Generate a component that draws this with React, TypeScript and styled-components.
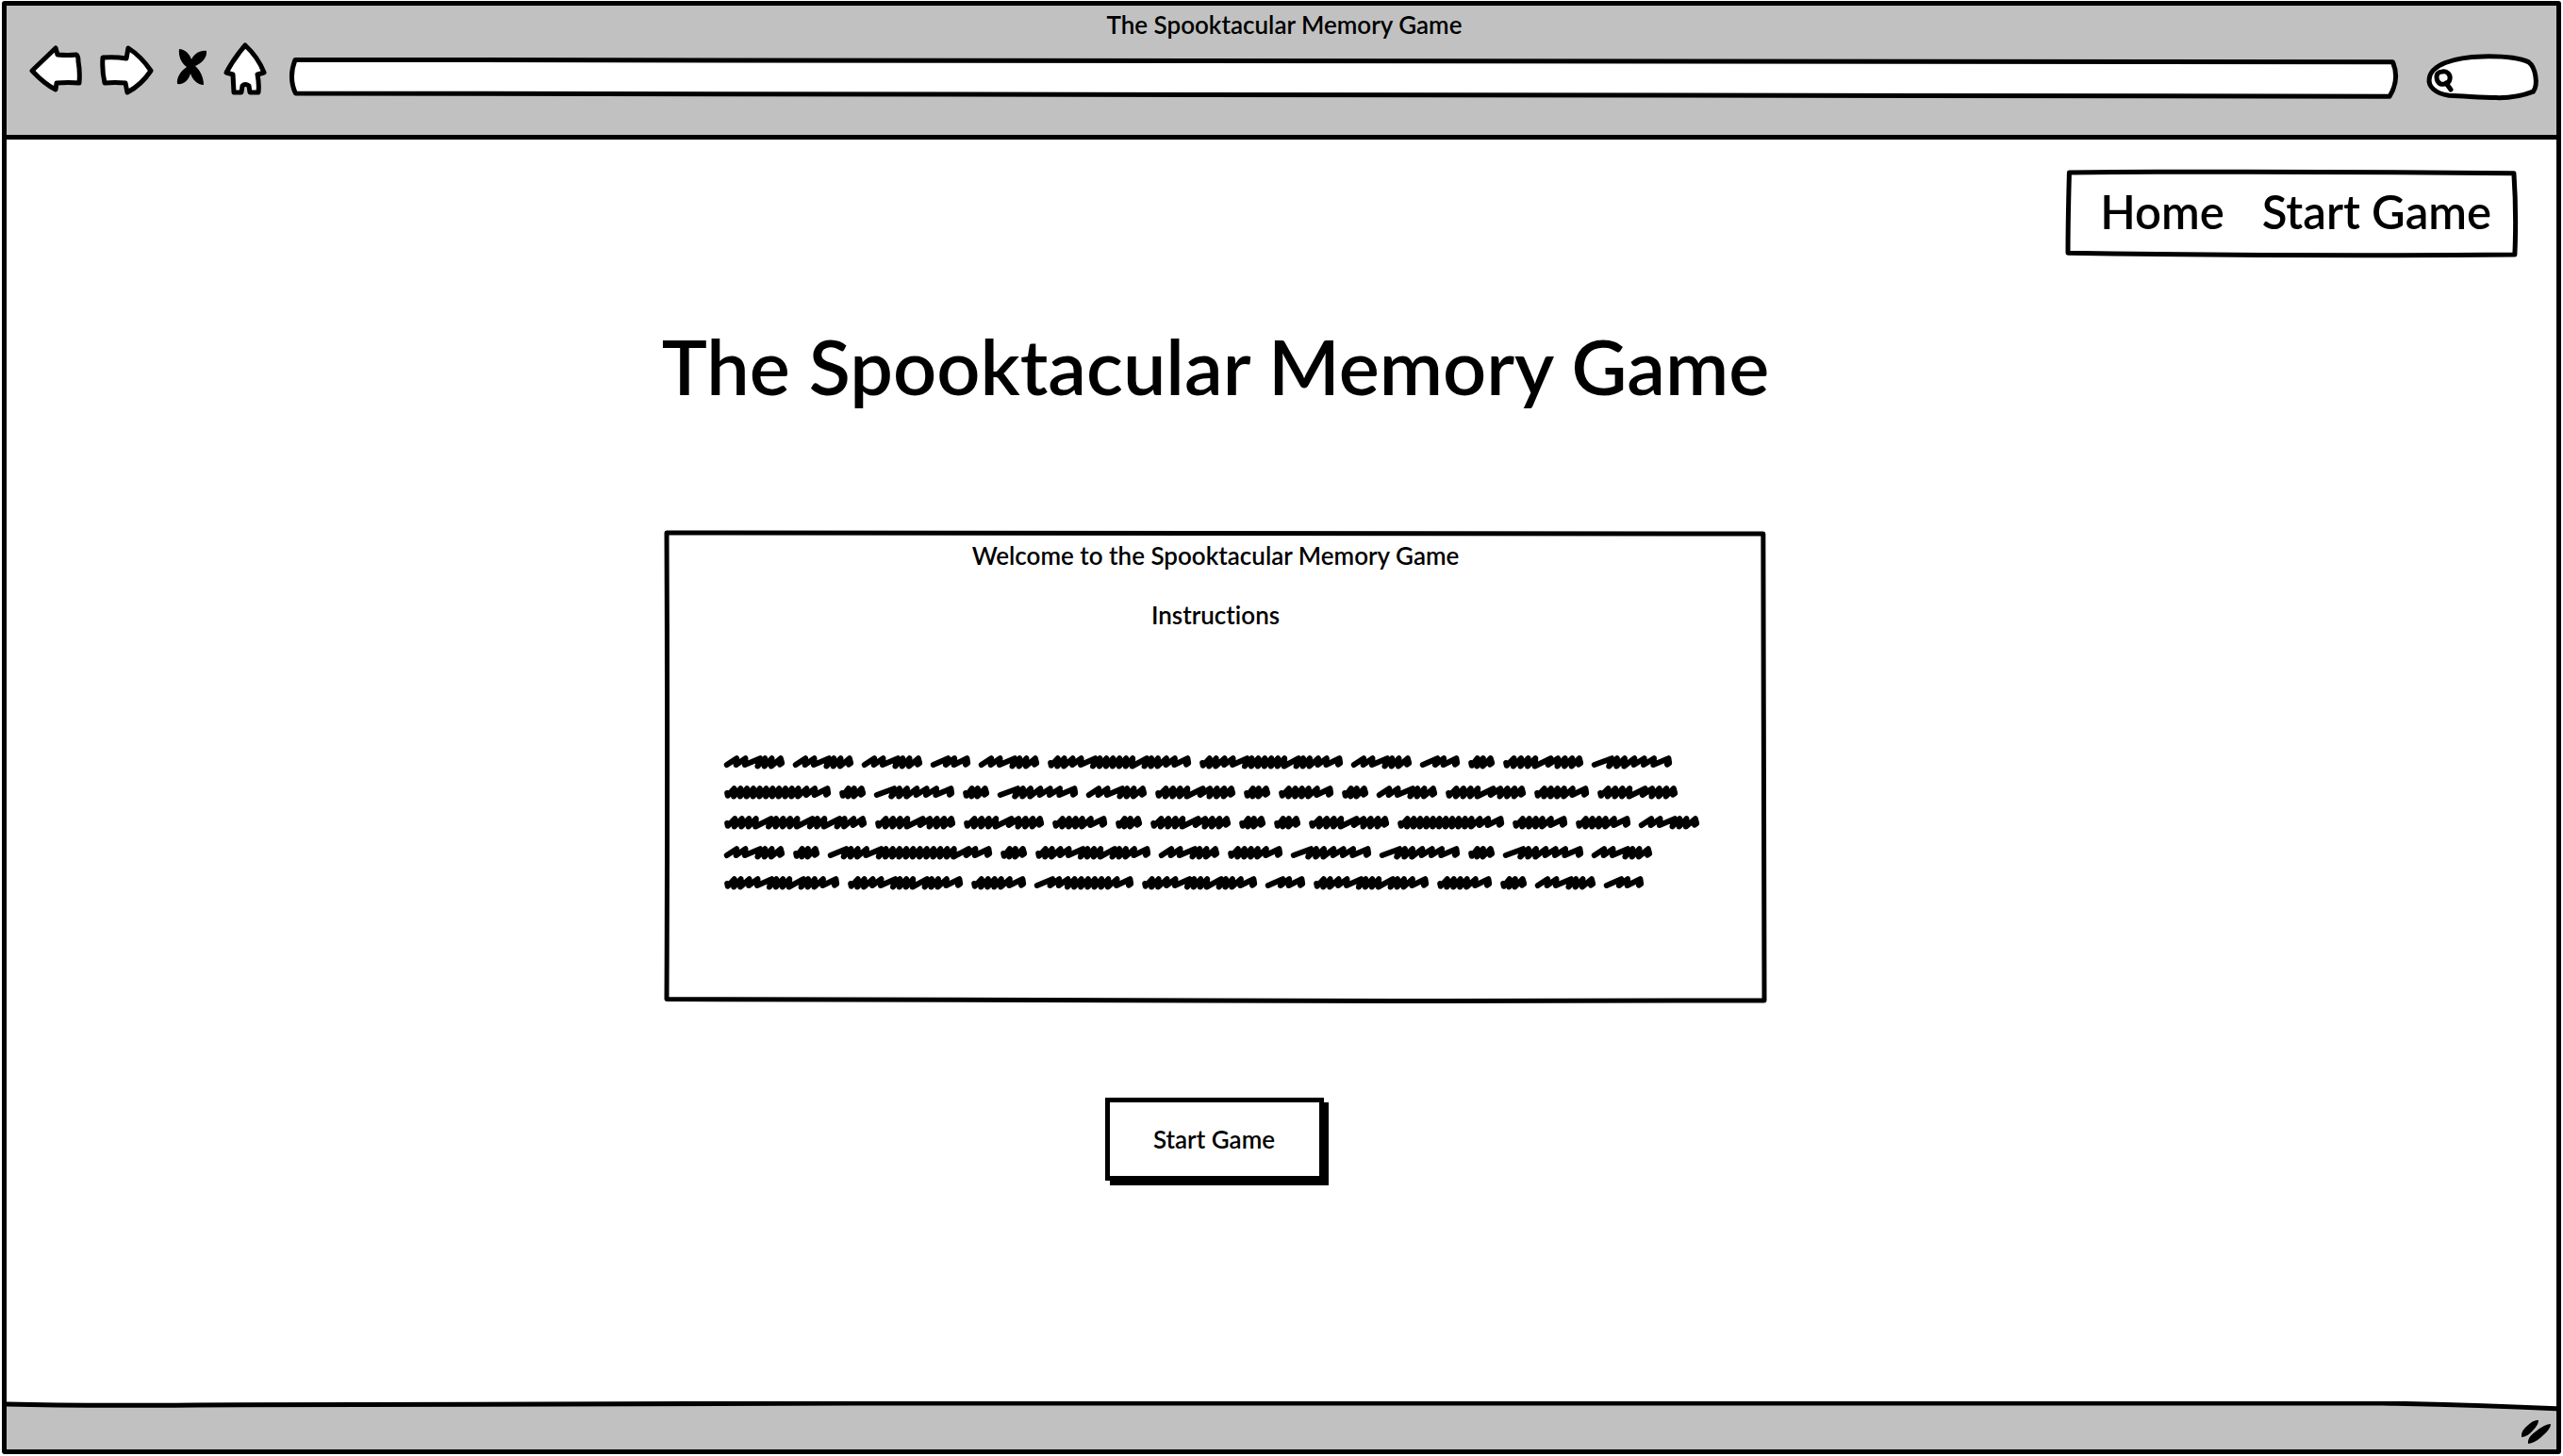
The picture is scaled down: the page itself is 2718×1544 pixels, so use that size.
import React from 'react';
import styled, { createGlobalStyle } from 'styled-components';

const ink = '#000';
const chrome = '#c1c1c1';

const GlobalStyle = createGlobalStyle`
  *, *::before, *::after { box-sizing: border-box; }
  body {
    margin: 0;
    background: #fff;
    color: ${ink};
    font-family: Lato, "Noto Sans", sans-serif;
    font-weight: 600;
    font-variant-ligatures: none;
  }
  h1, p { margin: 0; }
`;

const Page = styled.div`
  min-height: 100vh;
  padding: 1px 2px 2px;
  display: flex;
`;

const BrowserWindow = styled.div`
  flex: 1;
  display: flex;
  flex-direction: column;
  border: 5px solid ${ink};
  border-radius: 3px;
`;

const TitleBar = styled.header`
  background: ${chrome};
  border-bottom: 5px solid ${ink};
  padding: 4px 18px 36px 24px;
`;

const WindowTitle = styled.p`
  font-size: 26px;
  line-height: 32px;
  text-align: center;
`;

const Toolbar = styled.div`
  display: flex;
  align-items: flex-start;
  padding-top: 2px;
`;

const ToolButton = styled.button<{ $gap: number }>`
  flex: none;
  display: block;
  padding: 0;
  margin: 0 ${(p) => p.$gap}px 0 0;
  border: 0;
  background: none;
  svg { display: block; }
`;

const FieldWrap = styled.label<{ $wide?: boolean }>`
  position: relative;
  flex: ${(p) => (p.$wide ? '1' : 'none')};
  width: ${(p) => (p.$wide ? 'auto' : '120px')};
  height: ${(p) => (p.$wide ? '44px' : '50px')};
  margin-top: ${(p) => (p.$wide ? '17px' : '13px')};
  margin-right: ${(p) => (p.$wide ? '28px' : '0')};
  isolation: isolate;
`;

const Field = styled.input<{ $inset: number }>`
  width: 100%;
  height: 100%;
  padding: 0 14px 0 ${(p) => p.$inset}px;
  border: 0;
  outline: 0;
  background: transparent;
  font: inherit;
  font-size: 26px;
`;

const Outline = styled.svg`
  position: absolute;
  inset: 2px;
  width: calc(100% - 4px);
  height: calc(100% - 4px);
  overflow: visible;
  z-index: -1;
  path {
    fill: #fff;
    stroke: ${ink};
    stroke-width: 5px;
    stroke-linejoin: round;
    vector-effect: non-scaling-stroke;
  }
`;

const Content = styled.div`
  flex: 1;
  display: flex;
  flex-direction: column;
  padding: 32px 41px 0;
`;

const Nav = styled.nav`
  position: relative;
  isolation: isolate;
  align-self: flex-end;
  display: flex;
  gap: 40px;
  padding: 12px 28px 17px 36px;
`;

const NavLink = styled.a`
  color: inherit;
  text-decoration: none;
  font-size: 49px;
  line-height: 64px;
`;

const Main = styled.main`
  display: flex;
  flex-direction: column;
  align-items: center;
  padding-right: 140px;
`;

const Heading = styled.h1`
  margin-top: 63px;
  font-size: 81px;
  line-height: 104px;
  font-weight: inherit;
  white-space: nowrap;
`;

const Card = styled.section`
  position: relative;
  isolation: isolate;
  width: 100%;
  max-width: 1168px;
  margin-top: 122px;
  padding: 11px 5px 120px;
`;

const CardText = styled.p`
  font-size: 26px;
  line-height: 32px;
  text-align: center;
  & + & { margin-top: 31px; }
`;

const ScribbleBlock = styled.div`
  display: flex;
  flex-direction: column;
  gap: 18px;
  margin-top: 133px;
  padding-left: 58px;
`;

const ScribbleRow = styled.div`
  display: flex;
  gap: 9px;
`;

const Word = styled.svg`
  display: block;
  flex: none;
  overflow: visible;
  fill: none;
  stroke: ${ink};
  stroke-width: 6;
  stroke-linecap: round;
  stroke-linejoin: round;
`;

const StartButton = styled.button`
  margin: 101px 3px 0 0;
  width: 232px;
  height: 88px;
  padding: 0;
  background: #fff;
  color: ${ink};
  border: 5px solid ${ink};
  box-shadow: 5px 5px 0 ${ink};
  font: inherit;
  font-size: 26px;
`;

const StatusBar = styled.footer`
  position: relative;
  isolation: isolate;
  display: flex;
  justify-content: flex-end;
  align-items: flex-end;
  height: 51px;
  padding: 0 5px 6px;
`;

const StatusShape = styled.svg`
  position: absolute;
  inset: 0;
  width: 100%;
  height: 100%;
  z-index: -1;
`;

type Stroke = 's' | 'l' | 'd';
const strokes: Record<Stroke, { rise: number; step: number; base: number }> = {
  s: { rise: 10, step: 9, base: 10 },
  l: { rise: 16, step: 13, base: 10 },
  d: { rise: 8, step: 7, base: 11.5 },
};

const words: Record<string, [number, string]> = {
  A: [64, 'ssldds'],
  B: [28, 'dds'],
  C: [152, 'ddsslddddddlddssl'],
  D: [42, 'lsl'],
  E: [85, 'lddsssl'],
  F: [85, 'ddddlsddd'],
  G: [113, 'dddddddddddssl'],
  H: [151, 'ddddlddddlddldss'],
  I: [58, 'ddddsl'],
  J: [174, 'lddsldddddddddddlsl'],
  K: [122, 'ddssldddlddsl'],
  L: [105, 'lssddddddsl'],
};

const lines = [
  'AAADACCADBFE',
  'GBEBEAFBIBAFIF',
  'HFFIBFBBFGIIA',
  'ABJBKAIEEBEA',
  'KKILKDKIBAD',
];

function scribble(width: number, pattern: string) {
  const parts = pattern.split('').map((c) => strokes[c as Stroke]);
  const raw = parts.reduce((n, p) => n + p.step, 0);
  const k = (width - 8) / raw;
  let x = 2.8;
  let d = parts[0].base > 10 ? `M${x + 0.4} 8L${x + 1} 10.8` : `M${x} ${parts[0].base}`;
  parts.forEach((p, i) => {
    const next = parts[i + 1];
    const end = x + p.step * k;
    const peak = Math.min(x + p.rise * k, width - 3.6);
    d += `L${peak} 3.2`;
    d += next
      ? `L${end + 0.5} ${Math.max(p.base, next.base)}`
      : `L${width - 2.8} 8.2L${width - 5} 9.6`;
    x = end;
  });
  return d;
}

function Scribble({ kind }: { kind: string }) {
  const [width, pattern] = words[kind];
  return (
    <Word width={width} height={14} viewBox={`0 0 ${width} 14`} aria-hidden="true">
      <path d={scribble(width, pattern)} />
    </Word>
  );
}

function SketchOutline({ d }: { d: string }) {
  return (
    <Outline viewBox="0 0 100 100" preserveAspectRatio="none" aria-hidden="true">
      <path d={d} />
    </Outline>
  );
}

const iconStroke = {
  fill: '#fff',
  stroke: ink,
  strokeWidth: 5,
  strokeLinejoin: 'round' as const,
};

export default function App() {
  return (
    <>
      <GlobalStyle />
      <Page>
        <BrowserWindow>
          <TitleBar>
            <WindowTitle>The Spooktacular Memory Game</WindowTitle>
            <Toolbar>
              <ToolButton type="button" aria-label="Back" $gap={18}>
                <svg width="56" height="60" viewBox="31 44 56 60">
                  <path {...iconStroke} d="M34 75L59 51L61 58Q72 59 81 58Q83 59 83 65Q85 76 84 88Q73 87 60 88L59 95Q47 89 34 75Z" />
                </svg>
              </ToolButton>
              <ToolButton type="button" aria-label="Forward" $gap={24}>
                <svg width="58" height="60" viewBox="105 44 58 60">
                  <path {...iconStroke} d="M109 61Q122 60 134 62L136 51Q150 60 160 75Q150 90 135 98L133 88Q122 87 111 88Q108 75 109 61Z" />
                </svg>
              </ToolButton>
              <ToolButton type="button" aria-label="Stop" $gap={16}>
                <svg width="34" height="60" viewBox="187 44 34 60">
                  <path d="M190 52C196 52 201 57 203 63C206 57 212 53 219 54C220 61 214 67 207 70C212 74 216 82 216 90C209 90 204 84 202 78C200 85 195 90 188 89C187 82 192 75 198 71C192 67 189 59 190 52Z" />
                </svg>
              </ToolButton>
              <ToolButton type="button" aria-label="Home" $gap={24}>
                <svg width="46" height="60" viewBox="237 44 46 60">
                  <path {...iconStroke} d="M260 48Q274 61 280 77L273 79Q275 89 274 98H265L264 91Q260 88 257 91L256 98H248L247 79L240 77Q248 62 260 48Z" />
                </svg>
              </ToolButton>
              <FieldWrap $wide>
                <SketchOutline d="M0.18 1L99.75 7Q100.1 52 99.6 98L0.2 90Q-0.15 48 0.18 1Z" />
                <Field type="text" aria-label="Address" $inset={14} />
              </FieldWrap>
              <FieldWrap>
                <SketchOutline d="M19 92C6 87 0 70 1 54C2 22 23 3 50 2C68 1 84 6 92 15C98 26 101 66 96 83C88 91 77 98 62 97C48 97 34 93 19 92Z" />
                <Outline viewBox="0 0 116 46" aria-hidden="true">
                  <path d="M15 17C20 16 24 20 23 25C22 30 17 31 13 30C9 28 8 22 10 19Q12 17 15 17Z" />
                  <path d="M19 29L24 36" strokeLinecap="round" />
                </Outline>
                <Field type="text" aria-label="Search" $inset={34} />
              </FieldWrap>
            </Toolbar>
          </TitleBar>

          <Content>
            <Nav>
              <SketchOutline d="M0.3 1Q50 -1 99.6 2Q100.2 50 99.8 99Q50 101 0 97Q0 60 0.3 1Z" />
              <NavLink href="#home">Home</NavLink>
              <NavLink href="#game">Start Game</NavLink>
            </Nav>

            <Main>
              <Heading>The Spooktacular Memory Game</Heading>
              <Card>
                <SketchOutline d="M0 0.2Q60 0 99.9 0.4Q99.9 50 100 100Q50 100.3 0 99.7Q0.1 50 0 0.2Z" />
                <CardText>Welcome to the Spooktacular Memory Game</CardText>
                <CardText>Instructions</CardText>
                <ScribbleBlock>
                  {lines.map((line) => (
                    <ScribbleRow key={line}>
                      {line.split('').map((kind, i) => (
                        <Scribble key={i} kind={kind} />
                      ))}
                    </ScribbleRow>
                  ))}
                </ScribbleBlock>
              </Card>
              <StartButton type="button">Start Game</StartButton>
            </Main>
          </Content>

          <StatusBar>
            <StatusShape viewBox="0 0 2704 51" preserveAspectRatio="none" aria-hidden="true">
              <path
                d="M-4 3Q70 5 200 4Q500 2 900 2H2520Q2620 4 2708 8V56H-4Z"
                fill={chrome}
                stroke={ink}
                strokeWidth="5"
              />
            </StatusShape>
            <svg width="32" height="27" viewBox="2675 1505 32 27" aria-hidden="true">
              <path d="M2675 1525Q2674 1519 2681 1513Q2688 1506 2693 1507Q2693 1512 2687 1518Q2681 1525 2675 1525Z" />
              <path d="M2682 1532Q2681 1525 2690 1519Q2700 1511 2706 1511Q2706 1516 2698 1523Q2690 1531 2682 1532Z" />
            </svg>
          </StatusBar>
        </BrowserWindow>
      </Page>
    </>
  );
}
